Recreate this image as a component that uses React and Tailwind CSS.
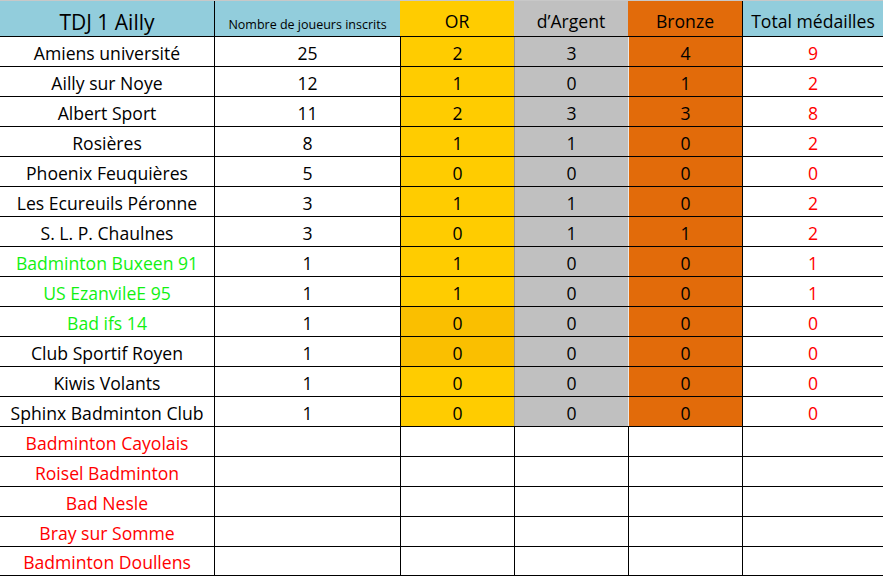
const COLS = 'grid grid-cols-[214px_186px_114px_114px_114px_141px]'

const rows = [
  ['Amiens université', 25, 2, 3, 4, 9],
  ['Ailly sur Noye', 12, 1, 0, 1, 2],
  ['Albert Sport', 11, 2, 3, 3, 8],
  ['Rosières', 8, 1, 1, 0, 2],
  ['Phoenix Feuquières', 5, 0, 0, 0, 0],
  ['Les Ecureuils Péronne', 3, 1, 1, 0, 2],
  ['S. L. P. Chaulnes', 3, 0, 1, 1, 2],
  ['Badminton Buxeen 91', 1, 1, 0, 0, 1, 'green'],
  ['US EzanvileE 95', 1, 1, 0, 0, 1, 'green'],
  ['Bad ifs 14', 1, 0, 0, 0, 0, 'green', 'dark'],
  ['Club Sportif Royen', 1, 0, 0, 0, 0, null, 'dark'],
  ['Kiwis Volants', 1, 0, 0, 0, 0],
  ['Sphinx Badminton Club', 1, 0, 0, 0, 0],
]

const absent = ['Badminton Cayolais', 'Roisel Badminton', 'Bad Nesle', 'Bray sur Somme', 'Badminton Doullens']

function Cell({ className = '', children }) {
  return (
    <div className={`flex h-full items-end justify-center pb-[3.5px] leading-none ${className}`}>
      {children}
    </div>
  )
}

export default function App() {
  return (
    <div className="h-[577px] w-[883px] overflow-hidden bg-white text-[17.6px] text-black [font-family:'Open_Sans',sans-serif]">
      {/* en-tête */}
      <div className={`${COLS} h-[36px] border-t border-[#c8c8c8]`}>
        <Cell className="items-center bg-[#92cddc] pb-[2px] text-[21px]">TDJ 1 Ailly</Cell>
        <Cell className="border-l border-black bg-[#92cddc] pb-[5px] text-[12.5px]">Nombre de joueurs inscrits</Cell>
        <Cell className="bg-[#ffcc00] pb-[5px]">OR</Cell>
        <Cell className="bg-[#c0c0c0] pb-[5px]">d’Argent</Cell>
        <Cell className="bg-[#e26b0a] pb-[5px]">Bronze</Cell>
        <Cell className="border-l border-black bg-[#92cddc] pb-[5px]">Total médailles</Cell>
      </div>

      {rows.map(([name, n, or, ag, br, tot, col, dark]) => (
        <div key={name} className={`${COLS} h-[30px] border-t border-black`}>
          <Cell className={col === 'green' ? 'text-[#12f012]' : ''}>{name}</Cell>
          <Cell className="border-l border-black">{n}</Cell>
          <Cell className={`border-l border-black ${dark ? 'bg-[#fabf00]' : 'bg-[#ffcc00]'}`}>{or}</Cell>
          <Cell className="border-l border-[#9a9a9a] bg-[#c0c0c0]">{ag}</Cell>
          <Cell className="border-l border-[#e8e8e8] bg-[#e26b0a]">{br}</Cell>
          <Cell className="border-l border-black text-[#ff0000]">{tot}</Cell>
        </div>
      ))}

      {absent.map((name, i) => (
        <div
          key={name}
          className={`${COLS} h-[30px] border-t border-black ${i === absent.length - 1 ? 'border-b' : ''}`}
        >
          <Cell className="text-[#ff0000]">{name}</Cell>
          <Cell className="border-l border-black" />
          <Cell className="border-l border-black" />
          <Cell className="border-l border-black" />
          <Cell className="border-l border-black" />
          <Cell className="border-l border-black" />
        </div>
      ))}
    </div>
  )
}
